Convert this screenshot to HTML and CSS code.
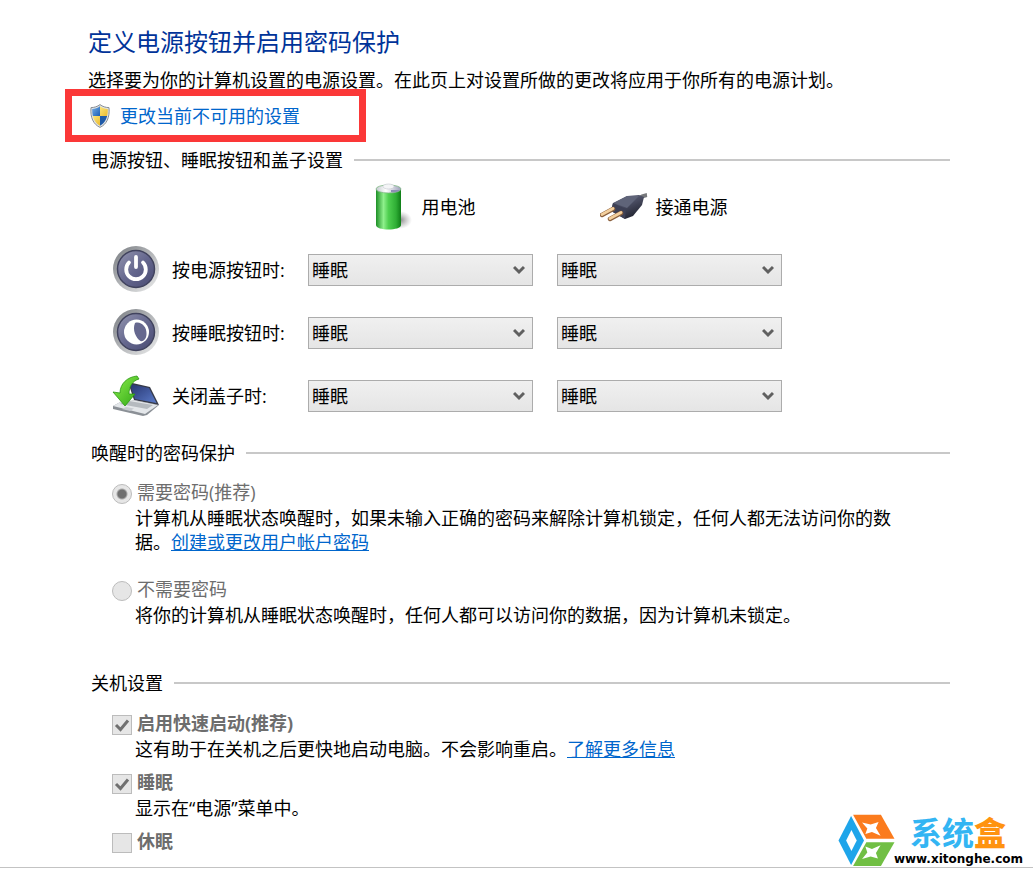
FILE: index.html
```html
<!DOCTYPE html>
<html lang="zh-CN">
<head>
    <meta charset="utf-8"/>
    <title>系统设置</title>
    <link rel="stylesheet" href="styles.css">
</head>
<body>
    <main>
        <h1>定义电源按钮并启用密码保护</h1>
        <p>选择要为你的计算机设置的电源设置。在此页上对设置所做的更改将应用于你所有的电源计划。</p>

        <div class="highlight">
            <svg class="shield" viewBox="0 0 20 24" width="20" height="24">
                <defs>
                    <linearGradient id="blue" x1="0" y1="0" x2="1" y2="1"><stop offset="0" stop-color="#8cc4f4"/><stop offset="1" stop-color="#1c5eb4"/></linearGradient>
                    <linearGradient id="gold" x1="0" y1="0" x2="1" y2="1"><stop offset="0" stop-color="#ffec86"/><stop offset="1" stop-color="#e8b424"/></linearGradient>
                    <clipPath id="shieldClip"><path d="M10 2.200C7.500 4 5 5 2.200 5C2 13 4.500 18.500 10 21.800C15.500 18.500 18 13 17.800 5C15 5 12.500 4 10 2.200Z"/></clipPath>
                </defs>
                <path d="M10 .6C7.500 2.600 4 3.600 1 3.600C0 13.500 3.500 20.500 10 23.400C16.500 20.500 20 13.500 19 3.600C16 3.600 12.500 2.600 10 .6Z" fill="#dfe3e6" stroke="#8a8f94" stroke-width="1"/>
                <g clip-path="url(#shieldClip)">
                    <rect width="10" height="12" fill="url(#blue)"/>
                    <rect x="10" width="10" height="12" fill="url(#gold)"/>
                    <rect y="12" width="10" height="12" fill="url(#gold)"/>
                    <rect x="10" y="12" width="10" height="12" fill="#1f5aa8"/>
                </g>
            </svg>
            <a href="#">更改当前不可用的设置</a>
        </div>

        <section>
            <h2>电源按钮、睡眠按钮和盖子设置</h2>
            <div class="buttonGrid">
                <div class="source battery">
                    <svg viewBox="0 0 48 48" width="48" height="48">
                        <defs>
                            <linearGradient id="cell"><stop offset="0" stop-color="#1d8f26"/><stop offset=".3" stop-color="#8ff08c"/><stop offset=".5" stop-color="#4fcf50"/><stop offset=".8" stop-color="#2fae35"/><stop offset="1" stop-color="#0f7d17"/></linearGradient>
                            <radialGradient id="shade"><stop offset="0" stop-color="#666" stop-opacity=".8"/><stop offset="1" stop-color="#999" stop-opacity="0"/></radialGradient>
                            <linearGradient id="cellTop"><stop offset="0" stop-color="#c5c9d0"/><stop offset=".4" stop-color="#fff"/><stop offset="1" stop-color="#9da0ba"/></linearGradient>
                        </defs>
                        <ellipse cx="34" cy="37" rx="12" ry="9" fill="url(#shade)"/>
                        <path d="M10 6V42C10 48 35 48 35 42V6Z" fill="url(#cell)"/>
                        <ellipse cx="22.500" cy="6" rx="12.500" ry="4" fill="url(#cellTop)" stroke="#7fb884" stroke-width=".8"/>
                        <ellipse cx="22.500" cy="3.500" rx="5.500" ry="2.500" fill="#f4f5f7" stroke="#c5c8ce" stroke-width=".6"/>
                        <path d="M25 7L34 7C32 9 28 10 25 9Z" fill="#8e8fb4"/>
                    </svg>
                    <span>用电池</span>
                </div>
                <div class="source plugged">
                    <svg viewBox="0 0 48 48" width="48" height="48">
                        <defs><linearGradient id="plug" x1="0" y1="0" x2=".6" y2="1"><stop offset="0" stop-color="#6f7488"/><stop offset=".5" stop-color="#4a4d62"/><stop offset="1" stop-color="#20222f"/></linearGradient></defs>
                        <path d="M38 16C41 13.500 43 12.500 47 12" stroke="#77797c" stroke-width="4" fill="none"/>
                        <path d="M13 20L11 28L25 36L33 33L42 22L44 14L39 12L27 13Z" fill="url(#plug)"/>
                        <path d="M13 20L26 26L25 36L11 28Z" fill="#3d4055"/>
                        <path d="M14 20L27 13L39 13L27 25Z" fill="#5f6479"/>
                        <path d="M2 32L13 26M10 36L21 30" stroke="#8a5f3c" stroke-width="4.500" stroke-linecap="round"/>
                        <path d="M2 31.500L13 25.500M10 35.500L21 29.500" stroke="#f3cf9c" stroke-width="2.800" stroke-linecap="round"/>
                    </svg>
                    <span>接通电源</span>
                </div>

                <div class="action">
                    <svg viewBox="0 0 48 48" width="48" height="48">
                        <defs>
                            <linearGradient id="ring" x1="0" y1="0" x2="1" y2="1"><stop offset="0" stop-color="#777b80"/><stop offset=".5" stop-color="#b4b6b9"/><stop offset="1" stop-color="#eceded"/></linearGradient>
                            <linearGradient id="face" x1="0" y1="0" x2="1" y2="1"><stop offset="0" stop-color="#9496b0"/><stop offset=".5" stop-color="#65678e"/><stop offset="1" stop-color="#484a72"/></linearGradient>
                        </defs>
                        <circle cx="24" cy="23" r="23" fill="url(#ring)"/>
                        <circle cx="24" cy="23" r="18.500" fill="url(#face)" stroke="#41435e" stroke-width="1.500"/>
                        <path d="M17 16.500A9.800 9.800 0 1 0 31 16.500M24 11V21" fill="none" stroke="#fff" stroke-width="3.800" stroke-linecap="round"/>
                    </svg>
                    <span>按电源按钮时:</span>
                </div>
                <select aria-label="按电源按钮时 用电池"><option>睡眠</option></select>
                <select aria-label="按电源按钮时 接通电源"><option>睡眠</option></select>

                <div class="action">
                    <svg viewBox="0 0 48 48" width="48" height="48">
                        <circle cx="24" cy="23" r="23" fill="url(#ring)"/>
                        <circle cx="24" cy="23" r="18.500" fill="url(#face)" stroke="#41435e" stroke-width="1.500"/>
                        <circle cx="24.500" cy="23" r="12.500" fill="#fff"/>
                        <path d="M23 14C29 12 35 18 34.500 25C34.500 30 31 33 28.500 32C24 29 20 21 23 14Z" fill="#66688f"/>
                    </svg>
                    <span>按睡眠按钮时:</span>
                </div>
                <select aria-label="按睡眠按钮时 用电池"><option>睡眠</option></select>
                <select aria-label="按睡眠按钮时 接通电源"><option>睡眠</option></select>

                <div class="action">
                    <svg viewBox="0 0 48 48" width="48" height="48">
                        <defs>
                            <linearGradient id="screen" x1="0" y1="0" x2="1" y2="1"><stop offset="0" stop-color="#26346e"/><stop offset="1" stop-color="#5a7ac8"/></linearGradient>
                            <linearGradient id="arrow" x1="0" y1="0" x2="1" y2="1"><stop offset="0" stop-color="#8eee4f"/><stop offset="1" stop-color="#2fa814"/></linearGradient>
                        </defs>
                        <path d="M1 34L14 27L47 33L35 43L31 44L1 37Z" fill="#8b9096"/>
                        <path d="M1 34L14 27L46 33L33 42Z" fill="#e4e7ea"/>
                        <path d="M14 28.500L41 33L35 37L8 32Z" fill="#b5babf"/>
                        <path d="M14 35L22 36.500L18 39L10 37Z" fill="#c7cbd0"/>
                        <path d="M16 10L38 15L47 33L22 28Z" fill="#363a48"/>
                        <path d="M18 12L37 16L44.500 31L23 27Z" fill="url(#screen)"/>
                        <path d="M25 4C15 5 8 12 8 21L1 20L13 34L23 22L17 22C17 15 20 9 27 7Z" fill="url(#arrow)" stroke="#2b9812" stroke-width=".8"/>
                    </svg>
                    <span>关闭盖子时:</span>
                </div>
                <select aria-label="关闭盖子时 用电池"><option>睡眠</option></select>
                <select aria-label="关闭盖子时 接通电源"><option>睡眠</option></select>
            </div>
        </section>

        <section>
            <h2>唤醒时的密码保护</h2>
            <div class="choice">
                <input type="radio" name="password" id="needPassword" checked disabled/>
                <label for="needPassword">需要密码(推荐)</label>
                <p>计算机从睡眠状态唤醒时，如果未输入正确的密码来解除计算机锁定，任何人都无法访问你的数据。<a href="#">创建或更改用户帐户密码</a></p>
            </div>
            <div class="choice">
                <input type="radio" name="password" id="noPassword" disabled/>
                <label for="noPassword">不需要密码</label>
                <p>将你的计算机从睡眠状态唤醒时，任何人都可以访问你的数据，因为计算机未锁定。</p>
            </div>
        </section>

        <section class="shutdown">
            <h2>关机设置</h2>
            <div class="choice">
                <input type="checkbox" id="fastStart" checked disabled/>
                <label for="fastStart">启用快速启动(推荐)</label>
                <p>这有助于在关机之后更快地启动电脑。不会影响重启。<a href="#">了解更多信息</a></p>
            </div>
            <div class="choice">
                <input type="checkbox" id="sleep" checked disabled/>
                <label for="sleep">睡眠</label>
                <p>显示在“电源”菜单中。</p>
            </div>
            <div class="choice">
                <input type="checkbox" id="hibernate" disabled/>
                <label for="hibernate">休眠</label>
            </div>
        </section>

        <div class="watermark">
            <svg viewBox="10 10 174 160" width="58" height="53">
                <path d="M49 16L11 90L49 164L88 90Z" fill="#1ea5ea"/>
                <path d="M50 58L66 90L50 122L34 90Z" fill="#fff"/>
                <path d="M55 12H139L180 85H95Z" fill="#fb7b1d"/>
                <path d="M82 36L108 42L132 34L124 52L138 76L112 64L92 70L98 54Z" fill="#fff"/>
                <path d="M95 95H180L139 167H55Z" fill="#71bf44"/>
                <path d="M92 108L112 116L138 104L124 128L130 144L108 138L82 146L98 126Z" fill="#fff"/>
            </svg>
            <div class="brand">
                <strong>系统<b>盒</b></strong>
                <span>www.xitonghe.com</span>
            </div>
        </div>
    </main>
</body>
</html>
```

FILE: styles.css
```css
*{
    margin: 0;
    padding: 0;
    box-sizing: border-box;
}
body{
    background: white;
    color: black;
    font-family: "Open Sans", "Noto Sans CJK SC", sans-serif;
    font-size: 18px;
    line-height: 24px;
}
main{
    position: relative;
    padding: 26px 83px 5px 88px;
    border-bottom: 1px solid #c3c3c3;
}
h1{
    margin-bottom: 10px;
    color: #003399;
    font-size: 24px;
    font-weight: normal;
    line-height: 32px;
}
a{
    color: #0066cc;
}
svg{
    display: block;
    flex-shrink: 0;
}
.highlight{
    display: flex;
    align-items: center;
    gap: 10px;
    width: 301px;
    height: 53px;
    margin: -3px 0 6px -23px;
    padding-left: 18px;
    border: 7px solid #fb3838;
}
.highlight a{
    text-decoration: none;
}
section{
    padding-left: 3px;
    margin-bottom: 21px;
}
h2{
    display: flex;
    align-items: center;
    gap: 11px;
    font-size: 18px;
    font-weight: normal;
}
h2::after{
    content: "";
    flex: 1;
    height: 2px;
    background: #c8c8c8;
}
.buttonGrid{
    display: grid;
    grid-template-columns: 172px 225px 225px;
    grid-auto-rows: 48px;
    gap: 15px 24px;
    align-items: center;
    margin-top: 11px;
    padding-left: 21px;
}
.source, .action{
    display: flex;
    align-items: center;
    gap: 8px;
}
.source{
    justify-content: center;
}
.battery{
    grid-column: 2;
}
.plugged{
    padding-right: 12px;
}
.action{
    gap: 12px;
    white-space: nowrap;
}
select{
    appearance: none;
    width: 100%;
    height: 32px;
    padding: 0 3px;
    border: 1px solid #acacac;
    border-radius: 0;
    color: black;
    font: inherit;
    background: url("data:image/svg+xml,%3Csvg xmlns='http://www.w3.org/2000/svg' width='12' height='10'%3E%3Cpath d='M1 2L6 7L11 2' fill='none' stroke='%23606060' stroke-width='3'/%3E%3C/svg%3E") no-repeat right 7px center, linear-gradient(#f0f0f0, #e5e5e5);
}
.choice{
    display: grid;
    grid-template-columns: 20px 1fr;
    column-gap: 5px;
    row-gap: 2px;
    align-items: center;
    margin: 15px 0 23px;
    padding-left: 21px;
}
.choice p{
    grid-column: 1 / 3;
    padding: 0 48px 0 23px;
}
.choice label{
    color: #6d6d6d;
}
.choice input{
    appearance: none;
    width: 20px;
    height: 20px;
    margin-top: 4px;
    border: 1px solid #bcbcbc;
    background: #e6e6e6 no-repeat center;
}
input[type="radio"]{
    border-radius: 50%;
}
input[type="radio"]:checked{
    background-image: radial-gradient(circle, #707070 4px, transparent 6px);
}
input[type="checkbox"]:checked{
    background-image: url("data:image/svg+xml,%3Csvg xmlns='http://www.w3.org/2000/svg' width='16' height='16'%3E%3Cpath d='M2 8L6.500 12.500L14 3.500' fill='none' stroke='%23707070' stroke-width='3'/%3E%3C/svg%3E");
}
.shutdown{
    margin: 44px 0 0;
}
.shutdown .choice{
    margin: 16px 0 9px;
}
.shutdown .choice + .choice{
    margin-top: 9px;
}
.shutdown label{
    font-weight: bold;
}
.watermark{
    position: absolute;
    right: 10px;
    bottom: 0;
    display: flex;
    align-items: center;
}
.brand{
    display: flex;
    flex-direction: column;
    margin-left: -2px;
}
.brand strong{
    padding-left: 16px;
    color: #33b5f3;
    font-size: 32px;
    line-height: 36px;
}
.brand b{
    color: #ff9310;
}
.brand span{
    font-family: "DejaVu Sans", sans-serif;
    font-size: 12px;
    font-weight: bold;
    line-height: 16px;
}
```
